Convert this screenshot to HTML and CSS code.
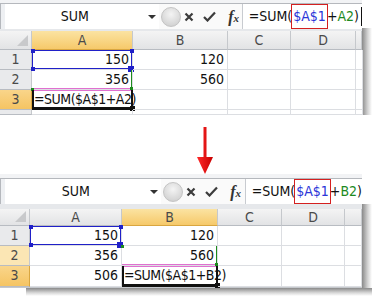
FILE: index.html
```html
<!DOCTYPE html>
<html lang="en">
<head>
  <meta charset="UTF-8">
  <title>Absolute reference copy</title>
  <link rel="stylesheet" href="styles.css">
</head>
<body>
  <!-- before: editing A3 -->
  <div class="shot shot-top">
    <div class="frame">
      <div class="strip"></div>
      <div class="fbar">
        <div class="namebox">SUM</div>
        <div class="dd"><span class="tri"></span></div>
        <div class="tools">
          <span class="knob"></span>
          <svg class="ico ico-x" width="10" height="10" viewBox="0 0 10 10"><path d="M1.5 1.5 L8.5 8.5 M8.5 1.5 L1.5 8.5" stroke="#3c3c3c" stroke-width="2.2" fill="none"/></svg>
          <svg class="ico ico-ok" width="13" height="11" viewBox="0 0 13 11"><path d="M1 6 L4.5 9.5 L12 1.5" stroke="#3c3c3c" stroke-width="2.2" fill="none"/></svg>
          <span class="fx">f<small>x</small></span>
        </div>
        <div class="formula">=SUM(<span class="r1">$A$1</span>+<span class="r2">A2</span>)<span class="caret"></span></div>
      </div>
      <div class="sep"></div>
      <div class="sheet sheet-top">
        <div class="hd corner"><span class="corner-tri"></span></div>
        <div class="hd sel">A</div>
        <div class="hd">B</div>
        <div class="hd">C</div>
        <div class="hd">D</div>
        <div class="hd"></div>

        <div class="rh">1</div>
        <div class="c num ref-blue">150<i class="h tl"></i><i class="h tr"></i><i class="h bl"></i><i class="h br"></i></div>
        <div class="c num">120</div>
        <div class="c"></div>
        <div class="c"></div>
        <div class="c"></div>

        <div class="rh">2</div>
        <div class="c num ref-green">356<i class="h bl g"></i><i class="h br g"></i></div>
        <div class="c num">560</div>
        <div class="c"></div>
        <div class="c"></div>
        <div class="c"></div>

        <div class="rh rh-sel">3</div>
        <div class="c active">=SUM($A$1+A2)<i class="h br k"></i></div>
        <div class="c"></div>
        <div class="c"></div>
        <div class="c"></div>
        <div class="c"></div>

        <div class="rh"></div>
        <div class="c"></div>
        <div class="c"></div>
        <div class="c"></div>
        <div class="c"></div>
        <div class="c"></div>
      </div>
    </div>
    <div class="shade shade-top"></div>
  </div>

  <div class="arrow">
    <svg width="20" height="48" viewBox="0 0 20 48">
      <defs>
        <linearGradient id="red" x1="0" x2="1" y1="0" y2="0">
          <stop offset="0" stop-color="#ff2a2a"/>
          <stop offset="1" stop-color="#c80000"/>
        </linearGradient>
      </defs>
      <path d="M8.5 0 H11.5 V30 H18 L10 47 L2 30 H8.5 Z" fill="url(#red)"/>
    </svg>
  </div>

  <!-- after: filled down to B3 -->
  <div class="shot shot-bottom">
    <div class="shot-row">
      <div class="frame">
        <div class="strip strip-b"></div>
        <div class="fbar">
          <div class="namebox">SUM</div>
          <div class="dd"><span class="tri"></span></div>
          <div class="tools">
            <span class="knob"></span>
            <svg class="ico ico-x" width="10" height="10" viewBox="0 0 10 10"><path d="M1.5 1.5 L8.5 8.5 M8.5 1.5 L1.5 8.5" stroke="#3c3c3c" stroke-width="2.2" fill="none"/></svg>
            <svg class="ico ico-ok" width="13" height="11" viewBox="0 0 13 11"><path d="M1 6 L4.5 9.5 L12 1.5" stroke="#3c3c3c" stroke-width="2.2" fill="none"/></svg>
            <span class="fx">f<small>x</small></span>
          </div>
          <div class="formula">=SUM(<span class="r1">$A$1</span>+<span class="r2">B2</span>)</div>
        </div>
        <div class="sep sep-b"></div>
        <div class="sheet sheet-bottom">
          <div class="hd corner"><span class="corner-tri"></span></div>
          <div class="hd">A</div>
          <div class="hd sel">B</div>
          <div class="hd">C</div>
          <div class="hd">D</div>
          <div class="hd"></div>

          <div class="rh">1</div>
          <div class="c num ref-blue">150<i class="h tl"></i><i class="h tr"></i><i class="h bl"></i><i class="h br"></i></div>
          <div class="c num">120</div>
          <div class="c"></div>
          <div class="c"></div>
          <div class="c"></div>

          <div class="rh rh-light">2</div>
          <div class="c num">356</div>
          <div class="c num ref-green">560<i class="h tl g"></i><i class="h br g"></i></div>
          <div class="c"></div>
          <div class="c"></div>
          <div class="c"></div>

          <div class="rh rh-sel">3</div>
          <div class="c num">506</div>
          <div class="c active">=SUM($A$1+B2)<i class="h br k"></i></div>
          <div class="c"></div>
          <div class="c"></div>
          <div class="c"></div>
        </div>
        <div class="foot"></div>
      </div>
      <div class="shade shade-bottom"></div>
    </div>
    <div class="bshade"></div>
  </div>
</body>
</html>
```

FILE: styles.css
```css
body {
  margin: 0;
  width: 372px;
  height: 298px;
  overflow: hidden;
  background: #fff;
  font-family: "Liberation Sans Narrow", "DejaVu Sans Condensed", "Liberation Sans", sans-serif;
  font-size: 14px;
  color: #111;
}

.shot {
  display: flex;
}

.shot-bottom {
  flex-direction: column;
}

.shot-row {
  display: flex;
}

.frame {
  width: 362px;
  background: #fff;
}

.shade {
  width: 10px;
  background: linear-gradient(to right, #8a8a8a, #d6d6d6 60%, #fff);
}

.shade-top {
  margin-top: 28px;
}

.shade-bottom {
  margin-top: 30px;
}

.bshade {
  height: 8px;
  margin-left: 26px;
  width: 346px;
  background: linear-gradient(#8a8a8a, #d8d8d8 60%, #fff);
}

.strip {
  height: 3px;
  background: #f2f3f5;
  border-bottom: 1px solid #b5b8bd;
}

.strip-b {
  height: 4px;
}

/* formula bar */
.fbar {
  display: flex;
  height: 25px;
  background: #eef0f3;
  border-left: 1px solid #b5b8bd;
}

.namebox {
  width: 144px;
  margin-left: 4px;
  background: #fff;
  text-align: center;
  line-height: 25px;
  font-size: 14px;
}

.dd {
  width: 15px;
  background: #fff;
  display: flex;
  align-items: center;
  justify-content: center;
}

.tri {
  width: 0;
  height: 0;
  border-left: 4px solid transparent;
  border-right: 4px solid transparent;
  border-top: 4px solid #333;
}

.tools {
  width: 85px;
  display: flex;
  align-items: center;
  background: #fafafa;
}

.knob {
  width: 20px;
  height: 20px;
  margin-left: 2px;
  margin-right: 3px;
  border-radius: 50%;
  background: radial-gradient(circle at 50% 35%, #f4f4f4, #d6d6d6 70%, #c6c6c6);
  border: 1px solid #c4c4c4;
  box-sizing: border-box;
}

.ico-x {
  margin-right: 9px;
}

.ico-ok {
  margin-right: 12px;
}

.fx {
  font-family: "Liberation Serif", serif;
  font-style: italic;
  font-weight: bold;
  font-size: 16px;
  color: #333;
}

.fx small {
  font-size: 11px;
}

.formula {
  flex: 1;
  background: #fff;
  border-left: 1px solid #c8cbd0;
  padding-left: 6px;
  line-height: 25px;
  white-space: nowrap;
}

.r1 {
  color: #2b35d8;
  outline: 1px solid #d42020;
  outline-offset: 0;
  padding: 3px 1px 4px 1px;
}

.r2 {
  color: #1d8a1d;
}

.caret {
  display: inline-block;
  width: 1px;
  height: 19px;
  margin-left: 2px;
  vertical-align: -5px;
  background: #111;
}

.sep {
  height: 2px;
  background: #e6e8eb;
}

.sep-b {
  height: 5px;
}

/* sheet grid */
.sheet {
  display: grid;
}

.sheet-top {
  grid-template-columns: 32px 101px 95px 63px 65px 6px;
  grid-template-rows: 19px 20px 20px 20px 5px;
}

.sheet-bottom {
  grid-template-columns: 30px 92px 96px 64px 63px 17px;
  grid-template-rows: 17px 20px 20px 21px;
}

.hd,
.rh {
  box-sizing: border-box;
  background: linear-gradient(#f4f4f4, #e2e3e5);
  border-right: 1px solid #c5c8cc;
  border-bottom: 1px solid #b8bcc2;
  color: #4a4a4a;
  text-align: center;
  font-size: 14px;
  overflow: hidden;
}

.hd {
  line-height: 18px;
}

.sheet-bottom .hd {
  line-height: 16px;
}

.rh {
  line-height: 19px;
  background: #e9eaec;
}

.corner {
  position: relative;
}

.corner-tri {
  position: absolute;
  right: 3px;
  bottom: 3px;
  width: 0;
  height: 0;
  border-left: 11px solid transparent;
  border-bottom: 11px solid #c8c9cb;
}

.hd.sel {
  background: linear-gradient(#fbe3a2, #f6c96a);
  border-bottom-color: #d9a640;
}

.rh-sel {
  background: linear-gradient(#f9d58a, #f5c463);
  border-right-color: #d9a640;
}

.rh-light {
  background: #fbe6b4;
}

.c {
  position: relative;
  box-sizing: border-box;
  border-right: 1px solid #dcdee2;
  border-bottom: 1px solid #dcdee2;
  line-height: 19px;
  padding: 0 3px;
  white-space: nowrap;
}

.num {
  text-align: right;
}

.ref-blue {
  box-shadow: inset 0 0 0 1px #2020c8;
}

.ref-green {
  box-shadow: inset -1px 0 0 #1d8a1d, inset 0 -1px 0 #e070d0;
}

.active {
  border-right: 2px solid #111;
  border-bottom: 3px solid #111;
  border-left: 2px solid #111;
  box-shadow: inset 0 1px 0 #e070d0;
  padding-left: 0;
  letter-spacing: -0.5px;
  overflow: visible;
  line-height: 18px;
}

.h {
  position: absolute;
  width: 4px;
  height: 4px;
  background: #2020c8;
}

.h.g {
  background: #1d8a1d;
  width: 3px;
  height: 3px;
}

.h.k {
  background: #111;
  width: 5px;
  height: 5px;
  right: -4px;
  bottom: -4px;
}

.tl { left: -1px; top: -1px; }
.tr { right: -2px; top: -1px; }
.bl { left: -1px; bottom: -2px; }
.br { right: -2px; bottom: -3px; width: 6px; height: 6px; }
.h.g.br { right: -1px; bottom: -1px; }

.foot {
  height: 1px;
  background: #c5c8cc;
}

.arrow {
  height: 59px;
  padding-left: 195px;
  padding-top: 12px;
  box-sizing: border-box;
}
```
